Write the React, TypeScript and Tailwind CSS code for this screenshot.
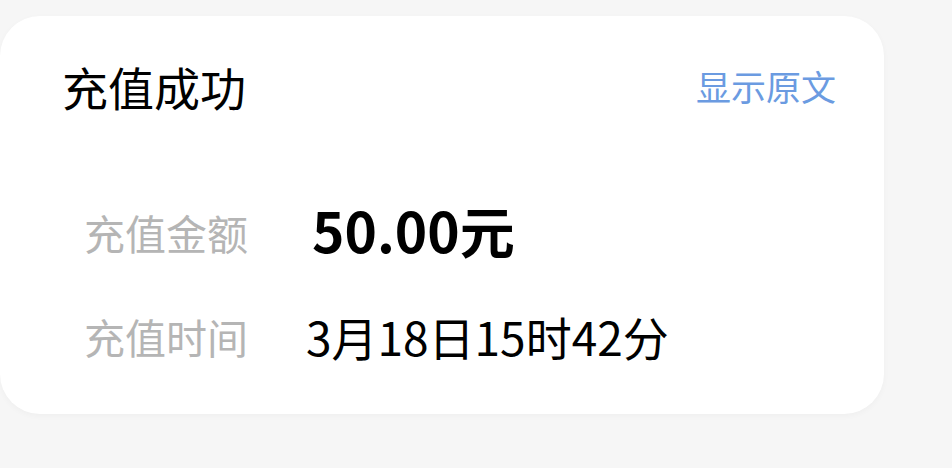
export default function App() {
  return (
    <div className="w-[952px] h-[468px] bg-[#f6f6f6] pt-[16px] overflow-hidden" style={{ fontFamily: '"Noto Sans CJK SC", "Noto Sans", sans-serif' }}>
      <div className="w-[884px] h-[398px] bg-white rounded-[40px] shadow-[0_2px_6px_rgba(0,0,0,0.03)] flex flex-col">
        <div className="flex items-center justify-between pl-[62px] pr-[48px] pt-[46px]">
          <div className="text-[46px] leading-[48px] text-black">充值成功</div>
          <div className="text-[35px] leading-[48px] text-[#6b9be1]">显示原文</div>
        </div>
        <div className="flex flex-col pl-[84px] pt-[98px] gap-[56px]">
          <div className="flex items-center h-[48px]">
            <div className="w-[228px] text-[41px] leading-[48px] text-[#b5b5b5]">充值金额</div>
            <div className="text-[55px] leading-[48px] font-bold text-black -translate-y-[3px]">50.00元</div>
          </div>
          <div className="flex items-center h-[48px]">
            <div className="w-[222px] text-[41px] leading-[48px] text-[#b5b5b5]">充值时间</div>
            <div className="text-[46px] leading-[48px] text-black">3月18日15时42分</div>
          </div>
        </div>
      </div>
    </div>
  );
}
